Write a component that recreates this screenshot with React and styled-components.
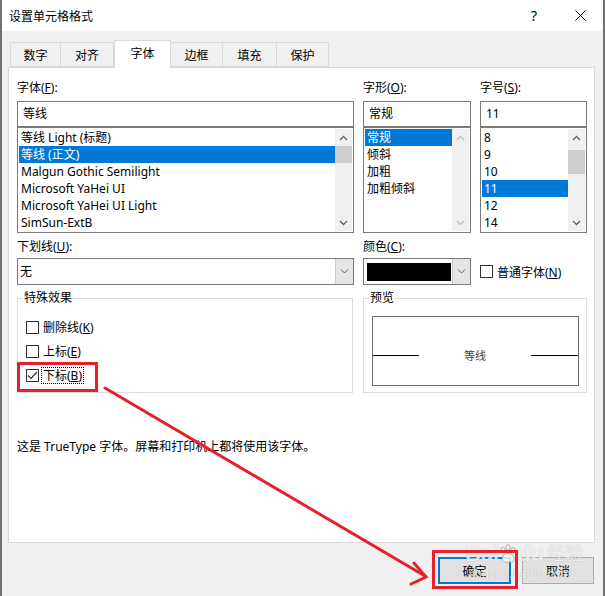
import React from "react";
import styled, { createGlobalStyle } from "styled-components";

const GlobalStyle = createGlobalStyle`
  * { box-sizing: border-box; }
  body {
    margin: 0;
    background: #ffffff;
    font-family: "Noto Sans", "Noto Sans CJK SC", sans-serif;
    font-size: 12px;
    color: #000;
  }
`;

const red = "#e8202a";
const blue = "#0078d7";

const Window = styled.div`
  position: relative;
  width: 605px;
  height: 596px;
  display: flex;
  flex-direction: column;
  background: #f0f0f0;
  border-left: 2px solid #707070;
  border-right: 2px solid #707070;
  overflow: hidden;
`;

const TitleBar = styled.div`
  height: 31px;
  flex: none;
  display: flex;
  align-items: center;
  background: #fff;
  padding-left: 7px;
  font-size: 12px;
`;

const Title = styled.div`
  flex: 1;
`;

const TitleButton = styled.div`
  width: 46px;
  height: 31px;
  display: flex;
  align-items: center;
  justify-content: center;
  font-size: 14px;
`;

const TabRow = styled.div`
  display: flex;
  align-items: flex-end;
  height: 36px;
  flex: none;
  padding-left: 8px;
`;

const Tab = styled.div`
  width: ${(p) => p.w}px;
  height: ${(p) => (p.active ? 28 : 25)}px;
  margin-bottom: ${(p) => (p.active ? -1 : 0)}px;
  display: flex;
  align-items: center;
  justify-content: center;
  background: ${(p) => (p.active ? "#fff" : "#f0f0f0")};
  border: 1px solid #d9d9d9;
  border-bottom: ${(p) => (p.active ? "none" : "1px solid #d9d9d9")};
  border-left: ${(p) => (p.first || p.active ? "1px solid #d9d9d9" : "none")};
  position: relative;
  z-index: ${(p) => (p.active ? 2 : 1)};
  padding-bottom: ${(p) => (p.active ? 3 : 0)}px;
`;

const Pane = styled.div`
  flex: 1;
  margin: 0 8px 0 6px;
  background: #fff;
  border: 1px solid #d9d9d9;
  padding: 10px 0 0 8px;
  position: relative;
  z-index: 1;
`;

const Columns = styled.div`
  display: grid;
  grid-template-columns: 337px 108px 107px;
  column-gap: 9px;
  margin-top: ${(p) => p.top || 0}px;
`;

const Field = styled.div`
  display: flex;
  flex-direction: column;
`;

const Label = styled.div`
  height: 20px;
  line-height: 20px;
  margin-bottom: ${(p) => (p.gap !== undefined ? p.gap : 3)}px;
`;

const TextInput = styled.div`
  height: 26px;
  border: 1px solid #7a7a7a;
  padding-left: 5px;
  line-height: 24px;
`;

const List = styled.div`
  height: 106px;
  border: 1px solid #7a7a7a;
  padding: 1px;
  display: flex;
`;

const Items = styled.div`
  flex: 1;
  display: flex;
  flex-direction: column;
`;

const Item = styled.div`
  height: 17px;
  line-height: 17px;
  padding-left: 2px;
  white-space: nowrap;
  background: ${(p) => (p.selected ? blue : "transparent")};
  color: ${(p) => (p.selected ? "#fff" : "#000")};
`;

const Scrollbar = styled.div`
  width: 17px;
  display: flex;
  flex-direction: column;
  background: #f0f0f0;
`;

const ScrollArrow = styled.div`
  height: 17px;
  flex: none;
  display: flex;
  align-items: center;
  justify-content: center;
`;

const Track = styled.div`
  flex: 1;
  display: flex;
  flex-direction: column;
`;

const Thumb = styled.div`
  margin-top: ${(p) => p.top}px;
  height: ${(p) => p.h}px;
  background: #cdcdcd;
`;

const Select = styled.div`
  height: 27px;
  border: 1px solid #7a7a7a;
  display: flex;
`;

const SelectValue = styled.div`
  flex: 1;
  padding-left: 2px;
  line-height: 25px;
`;

const Swatch = styled.div`
  flex: 1;
  margin: 4px 1px 3px 3px;
  background: #000;
`;

const DropButton = styled.div`
  width: 18px;
  display: flex;
  align-items: center;
  justify-content: center;
  background: #e5e5e5;
  border-left: 1px solid #cccccc;
`;

const CheckLine = styled.div`
  display: flex;
  align-items: center;
  gap: 4px;
  height: ${(p) => p.h || 24}px;
`;

const Box = styled.div`
  width: 13px;
  height: 13px;
  flex: none;
  border: 1px solid #333;
  background: #fff;
  display: flex;
  align-items: center;
  justify-content: center;
`;

const Focus = styled.span`
  border: 1px dotted #000;
  padding: 0 1px;
  line-height: 15px;
  margin-left: -2px;
`;

const BottomRow = styled.div`
  display: grid;
  grid-template-columns: 336px 224px;
  column-gap: 10px;
  margin-top: 13px;
`;

const Group = styled.div`
  position: relative;
  height: 95px;
  border: 1px solid #dcdcdc;
  padding: ${(p) => p.pad};
`;

const Legend = styled.div`
  position: absolute;
  top: -9px;
  left: 5px;
  background: #fff;
  padding: 0 1px;
  line-height: 16px;
`;

const PreviewBox = styled.div`
  height: 70px;
  border: 1px solid #6d6d6d;
  display: flex;
  align-items: center;
  padding-top: 8px;
`;

const PreviewLine = styled.div`
  width: ${(p) => p.w}px;
  height: 1px;
  background: #000;
`;

const PreviewText = styled.div`
  flex: 1;
  text-align: center;
  font-size: 11px;
  color: #444;
`;

const Note = styled.div`
  margin-top: 44px;
  line-height: 19px;
`;

const Footer = styled.div`
  height: 53px;
  flex: none;
  display: flex;
  justify-content: flex-end;
  gap: 11px;
  padding: 14px 9px 0 0;
`;

const Button = styled.div`
  width: ${(p) => p.w}px;
  height: 27px;
  display: flex;
  align-items: center;
  justify-content: center;
  background: #e1e1e1;
  border: ${(p) => (p.primary ? `2px solid ${blue}` : "1px solid #adadad")};
`;

const Overlay = styled.svg`
  position: absolute;
  left: 0;
  top: 0;
  pointer-events: none;
  z-index: 5;
`;

const Watermark = styled.div`
  position: absolute;
  left: 463px;
  top: 541px;
  z-index: 4;
  pointer-events: none;
  color: rgba(255, 255, 255, 0.75);
  text-shadow: 0 0 1px rgba(120, 120, 120, 0.5);
  font-family: "Liberation Sans", "Noto Sans CJK SC", sans-serif;
  display: flex;
  flex-direction: column;
  align-items: flex-start;
`;

const WmTop = styled.div`
  display: flex;
  align-items: center;
  font-size: 22px;
  font-weight: bold;
  line-height: 26px;
`;

const WmCn = styled.span`
  font-size: 18px;
  font-weight: normal;
  margin-left: 3px;
`;

const WmUrl = styled.div`
  font-size: 12px;
  line-height: 14px;
  margin-left: 4px;
  letter-spacing: 0.3px;
`;

const Chevron = ({ up, color = "#606060" }) => (
  <svg width="9" height="6" viewBox="0 0 9 6">
    <path
      d={up ? "M1 5 L4.5 1.5 L8 5" : "M1 1 L4.5 4.5 L8 1"}
      fill="none"
      stroke={color}
      strokeWidth="1.3"
    />
  </svg>
);

const DropChevron = () => (
  <svg width="9" height="5" viewBox="0 0 9 5">
    <path d="M1 0.5 L4.5 4 L8 0.5" fill="none" stroke="#606060" strokeWidth="1" />
  </svg>
);

const ScrollBar = ({ thumb, disabled }) => {
  const c = disabled ? "#c3c3c3" : "#606060";
  return (
    <Scrollbar>
      <ScrollArrow>
        <Chevron up color={c} />
      </ScrollArrow>
      <Track>{thumb && <Thumb top={thumb[0]} h={thumb[1]} />}</Track>
      <ScrollArrow>
        <Chevron color={c} />
      </ScrollArrow>
    </Scrollbar>
  );
};

const fonts = [
  "等线 Light (标题)",
  "等线 (正文)",
  "Malgun Gothic Semilight",
  "Microsoft YaHei UI",
  "Microsoft YaHei UI Light",
  "SimSun-ExtB",
];
const styles = ["常规", "倾斜", "加粗", "加粗倾斜"];
const sizes = ["8", "9", "10", "11", "12", "14"];
const tabs = [
  ["数字", 51],
  ["对齐", 53],
  ["字体", 57],
  ["边框", 52],
  ["填充", 54],
  ["保护", 52],
];

export default function App() {
  return (
    <>
      <GlobalStyle />
      <Window>
        <TitleBar>
          <Title>设置单元格格式</Title>
          <TitleButton>?</TitleButton>
          <TitleButton>
            <svg width="11" height="11" viewBox="0 0 11 11">
              <path d="M0.5 0.5 L10.5 10.5 M10.5 0.5 L0.5 10.5" stroke="#000" strokeWidth="1" />
            </svg>
          </TitleButton>
        </TitleBar>

        <TabRow>
          {tabs.map(([t, w], i) => (
            <Tab key={t} w={w} first={i === 0} active={t === "字体"}>
              {t}
            </Tab>
          ))}
        </TabRow>

        <Pane>
          <Columns>
            <Field>
              <Label>
                字体(<u>F</u>):
              </Label>
              <TextInput>等线</TextInput>
              <List>
                <Items>
                  {fonts.map((f, i) => (
                    <Item key={f} selected={i === 1}>
                      {f}
                    </Item>
                  ))}
                </Items>
                <ScrollBar thumb={[0, 17]} />
              </List>
            </Field>
            <Field>
              <Label>
                字形(<u>O</u>):
              </Label>
              <TextInput>常规</TextInput>
              <List>
                <Items>
                  {styles.map((s, i) => (
                    <Item key={s} selected={i === 0}>
                      {s}
                    </Item>
                  ))}
                </Items>
                <ScrollBar disabled />
              </List>
            </Field>
            <Field>
              <Label>
                字号(<u>S</u>):
              </Label>
              <TextInput>11</TextInput>
              <List>
                <Items>
                  {sizes.map((s) => (
                    <Item key={s} selected={s === "11"}>
                      {s}
                    </Item>
                  ))}
                </Items>
                <ScrollBar thumb={[4, 24]} />
              </List>
            </Field>
          </Columns>

          <Columns top={4}>
            <Field>
              <Label gap={1}>
                下划线(<u>U</u>):
              </Label>
              <Select>
                <SelectValue>无</SelectValue>
                <DropButton>
                  <DropChevron />
                </DropButton>
              </Select>
            </Field>
            <Field>
              <Label gap={1}>
                颜色(<u>C</u>):
              </Label>
              <Select>
                <Swatch />
                <DropButton>
                  <DropChevron />
                </DropButton>
              </Select>
            </Field>
            <Field>
              <Label gap={1} />
              <CheckLine h={27}>
                <Box />
                <span>
                  普通字体(<u>N</u>)
                </span>
              </CheckLine>
            </Field>
          </Columns>

          <BottomRow>
            <Group pad="16px 8px 0 8px">
              <Legend>特殊效果</Legend>
              <CheckLine>
                <Box />
                <span>
                  删除线(<u>K</u>)
                </span>
              </CheckLine>
              <CheckLine>
                <Box />
                <span>
                  上标(<u>E</u>)
                </span>
              </CheckLine>
              <CheckLine>
                <Box>
                  <svg width="11" height="9" viewBox="0 0 11 9">
                    <path d="M1 4.5 L4 7.5 L10 1" fill="none" stroke="#333" strokeWidth="1.2" />
                  </svg>
                </Box>
                <Focus>
                  下标(<u>B</u>)
                </Focus>
              </CheckLine>
            </Group>
            <Group pad="17px 7px 0 8px">
              <Legend>预览</Legend>
              <PreviewBox>
                <PreviewLine w={46} />
                <PreviewText>等线</PreviewText>
                <PreviewLine w={47} />
              </PreviewBox>
            </Group>
          </BottomRow>

          <Note>这是 TrueType 字体。屏幕和打印机上都将使用该字体。</Note>
        </Pane>

        <Footer>
          <Button w={73} primary>
            确定
          </Button>
          <Button w={72}>取消</Button>
        </Footer>

        <Watermark>
          <WmTop>
            Bai
            <svg width="18" height="20" viewBox="0 0 18 20">
              <g fill="none" stroke="rgba(150,150,150,0.6)" strokeWidth="1.2">
                <ellipse cx="4" cy="6" rx="2" ry="2.6" fill="rgba(255,255,255,0.8)" />
                <ellipse cx="9" cy="3.5" rx="2" ry="2.6" fill="rgba(255,255,255,0.8)" />
                <ellipse cx="14" cy="6" rx="2" ry="2.6" fill="rgba(255,255,255,0.8)" />
                <path d="M3 16 C3 11 6 9.5 9 9.5 C12 9.5 15 11 15 16 C15 19 3 19 3 16 Z" fill="rgba(255,255,255,0.8)" />
              </g>
            </svg>
            du
            <WmCn>经验</WmCn>
          </WmTop>
          <WmUrl>jingyan.baidu.com</WmUrl>
        </Watermark>

        <Overlay width="605" height="596" viewBox="0 0 605 596" style={{ left: -2 }}>
          <rect x="18.5" y="363.5" width="78" height="27" fill="none" stroke={red} strokeWidth="3" />
          <rect x="433.5" y="551.5" width="83" height="36" fill="none" stroke={red} strokeWidth="3" />
          <g stroke={red} strokeWidth="3" strokeLinecap="round" fill="none">
            <path d="M105 388 L425 576" />
            <path d="M414 563 L426 577 L411 584" />
          </g>
        </Overlay>
      </Window>
    </>
  );
}
